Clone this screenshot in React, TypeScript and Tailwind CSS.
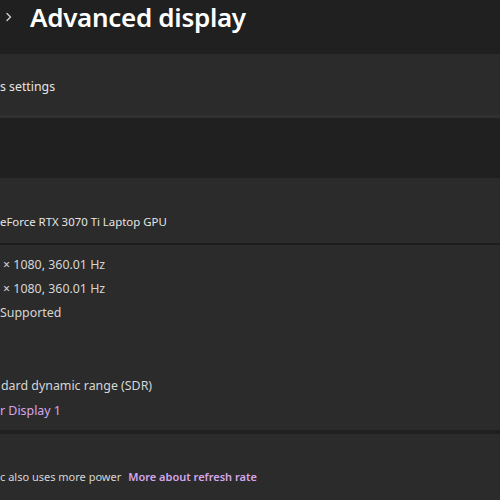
import React from "react";

export default function App() {
  const font = { fontFamily: '"Noto Sans", "Open Sans", sans-serif' };
  return (
    <div className="w-[500px] h-[500px] overflow-hidden bg-[#202020] text-white flex flex-col" style={font}>
      <div className="h-[54px] flex items-start shrink-0">
        <div className="pt-[12px] pl-[5px] w-[30px]">
          <svg width="8" height="10" viewBox="0 0 8 10">
            <path d="M2 1.5 L5.5 5 L2 8.5" stroke="#cfcfcf" strokeWidth="1.4" fill="none" strokeLinecap="round" strokeLinejoin="round" />
          </svg>
        </div>
        <h1 className="text-[26px] leading-[35px] font-semibold tracking-[-0.3px] text-white whitespace-nowrap">Advanced display</h1>
      </div>

      <div className="h-[64px] shrink-0 bg-[#2b2b2b] border-b-[3px] border-[#303030] flex items-center">
        <span className="text-[12.3px] text-[#e6e6e6] mt-[6px]">s settings</span>
      </div>

      <div className="h-[60px] shrink-0" />

      <div className="h-[65px] shrink-0 bg-[#2b2b2b] flex items-end pb-[13px]">
        <span className="text-[11.4px] text-[#e6e6e6]">eForce RTX 3070 Ti Laptop GPU</span>
      </div>
      <div className="h-[2px] shrink-0 bg-[#1d1d1d]" />

      <div className="h-[185px] shrink-0 bg-[#2b2b2b] flex flex-col pt-[8px]">
        <div className="h-[24px] flex items-center pl-[3px] text-[12.4px] text-[#d6d6d6]">× 1080, 360.01 Hz</div>
        <div className="h-[24px] flex items-center pl-[3px] text-[12.4px] text-[#d6d6d6]">× 1080, 360.01 Hz</div>
        <div className="h-[24px] flex items-center text-[12.4px] text-[#d6d6d6]">Supported</div>
        <div className="h-[49px]" />
        <div className="h-[24px] flex items-center pl-[1px] text-[12.4px] text-[#d6d6d6]">dard dynamic range (SDR)</div>
        <div className="h-[26px] flex items-center text-[12.4px] text-[#d7a6ea]">r Display 1</div>
      </div>
      <div className="h-[4px] shrink-0 bg-[#202020]" />

      <div className="flex-1 bg-[#2b2b2b] flex items-start pt-[35px]">
        <span className="text-[11px] text-[#d6d6d6]">c also uses more power</span>
        <span className="text-[11px] text-[#d7a6ea] font-semibold ml-[7px]">More about refresh rate</span>
      </div>
    </div>
  );
}
